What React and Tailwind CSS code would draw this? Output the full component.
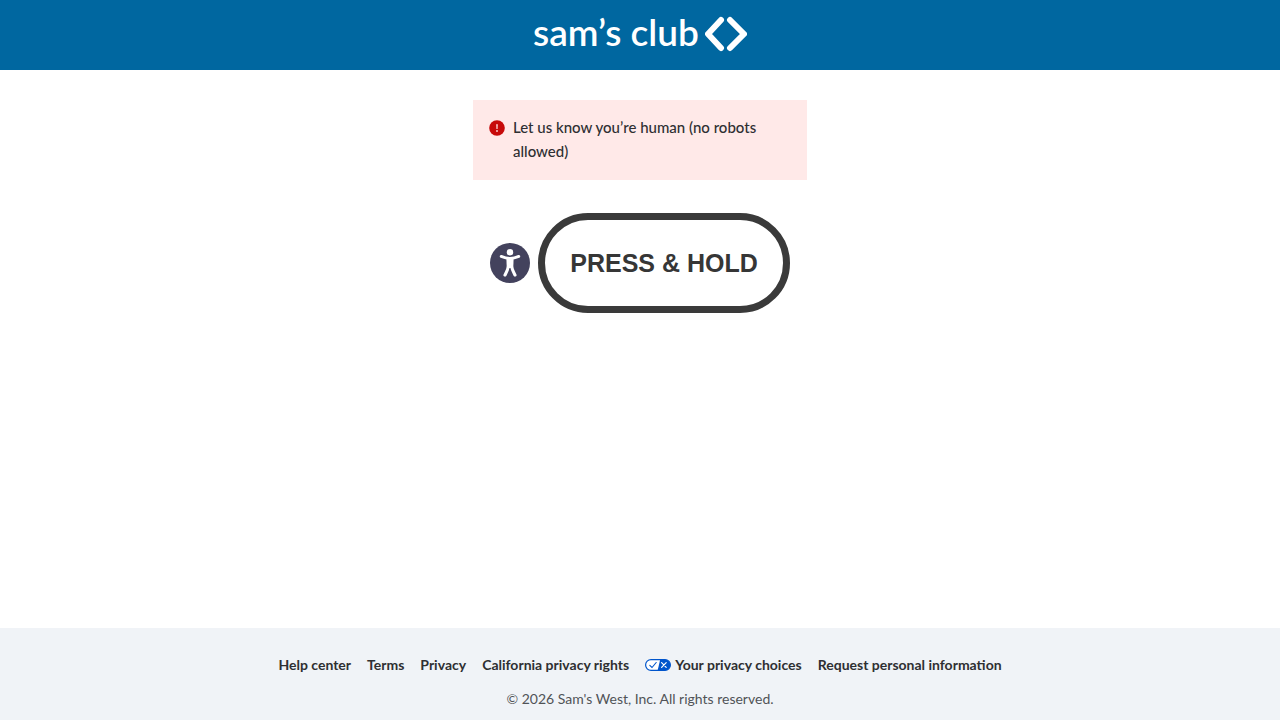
import React from "react";

const footerLinks = [
  { label: "Help center" },
  { label: "Terms" },
  { label: "Privacy" },
  { label: "California privacy rights" },
  { label: "Your privacy choices", icon: true },
  { label: "Request personal information" },
];

function LogoMark() {
  return (
    <svg viewBox="0 0 42 36" className="h-9 w-[42px]" fill="none" stroke="white" strokeWidth="6" strokeLinecap="round" strokeLinejoin="round" aria-hidden="true">
      <path d="M16 4 3 18l13 14" />
      <path d="M25 4l14 14-14 14" />
    </svg>
  );
}

function ErrorIcon() {
  return (
    <svg viewBox="0 0 16 16" className="mt-[5px] h-4 w-4 shrink-0" aria-hidden="true">
      <circle cx="8" cy="8" r="7.8" fill="#c70a0a" />
      <path d="M7.2 4.3h1.6l-.25 4.6h-1.1z" fill="#fdd" />
      <circle cx="8" cy="11" r=".9" fill="#fdd" />
    </svg>
  );
}

function AccessibilityIcon() {
  return (
    <svg viewBox="0 0 40 40" className="h-10 w-10" aria-hidden="true">
      <circle cx="20" cy="20" r="20" fill="#43425d" />
      <circle cx="20" cy="9.2" r="3.2" fill="white" />
      <path
        d="M11.2 13.4c3 1.3 5.800 2 8.800 2s5.800-.7 8.800-2"
        fill="none"
        stroke="white"
        strokeWidth="2.800"
        strokeLinecap="round"
      />
      <path
        d="M18.400 16.500v6c0 3-1.700 6.200-3.400 9.500M21.600 16.500v6c0 3 1.700 6.200 3.400 9.500"
        fill="none"
        stroke="white"
        strokeWidth="3.100"
        strokeLinecap="round"
      />
      <path d="M16.400 15h7.200l-.5 10h-6.200z" fill="white" />
    </svg>
  );
}

function PrivacyIcon() {
  return (
    <svg viewBox="0 0 26 12" className="h-3 w-[26px]" aria-hidden="true">
      <rect x=".6" y=".6" width="24.8" height="10.8" rx="5.4" fill="white" stroke="#0055cc" strokeWidth="1.2" />
      <path d="M15.2.6H20a5.4 5.4 0 0 1 0 10.8h-7.4z" fill="#0055cc" />
      <path d="M4.8 6.3l2.2 2.2 4.2-5" fill="none" stroke="#0055cc" strokeWidth="1.1" strokeLinecap="round" />
      <path d="M16.6 3.6l4.6 4.8M21.2 3.6l-4.6 4.8" stroke="white" strokeWidth="1.2" strokeLinecap="round" />
    </svg>
  );
}

export default function App() {
  return (
    <div className="flex min-h-screen flex-col bg-white font-['Lato','Liberation_Sans',sans-serif] text-[#2e2f32]">
      <header className="flex justify-center bg-[#0067a0] pt-4 pb-[18px]">
        <a href="#" className="flex items-start gap-1.5 text-white">
          <span className="text-[37px] leading-8 font-semibold">sam’s club</span>
          <LogoMark />
        </a>
      </header>

      <main className="flex flex-1 flex-col items-center px-4 pt-[30px] pb-8">
        <div role="alert" className="flex w-full max-w-[334px] gap-2 bg-[#ffe9e8] px-4 pt-[15px] pb-[17px]">
          <ErrorIcon />
          <p className="text-[15px] leading-6 font-medium">Let us know you’re human (no robots allowed)</p>
        </div>

        <div className="mt-[33px] flex items-center gap-2">
          <button type="button" aria-label="Accessible challenge" className="rounded-full">
            <AccessibilityIcon />
          </button>
          <button
            type="button"
            className="h-[100px] w-[252px] rounded-full border-[7px] border-[#3a3a3a] pt-0.5 font-['Liberation_Sans',sans-serif] text-[25px] font-bold whitespace-nowrap text-[#363636]"
          >
            PRESS &amp; HOLD
          </button>
        </div>
      </main>

      <footer className="flex flex-col items-center gap-3.5 bg-[#f0f3f7] px-4 pt-[27px] pb-[11px] text-sm leading-5">
        <nav className="flex flex-wrap justify-center gap-x-4 font-bold">
          {footerLinks.map((link) => (
            <a key={link.label} href="#" className="flex items-center gap-1">
              {link.icon && <PrivacyIcon />}
              {link.label}
            </a>
          ))}
        </nav>
        <p className="text-[#515357]">© 2026 Sam's West, Inc. All rights reserved.</p>
      </footer>
    </div>
  );
}
